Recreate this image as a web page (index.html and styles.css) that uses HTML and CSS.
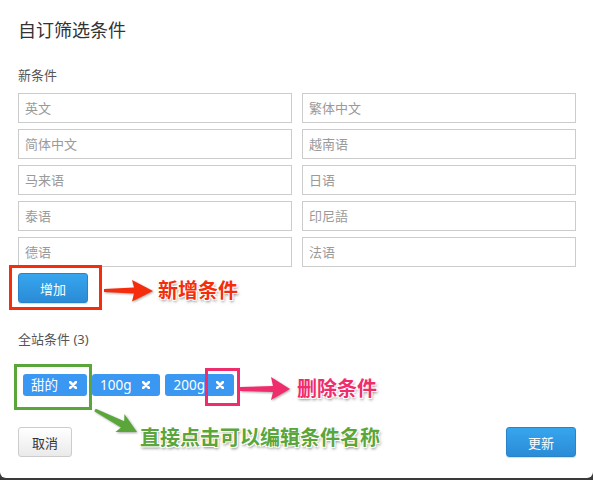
FILE: index.html
```html
<!DOCTYPE html>
<html lang="zh">
<head>
  <meta charset="UTF-8">
  <title>自订筛选条件</title>
  <link rel="stylesheet" href="styles.css">
</head>
<body>
  <div class="modal">
    <h3 class="modal-title">自订筛选条件</h3>

    <p class="section-label">新条件</p>
    <div class="lang-grid">
      <input type="text" placeholder="英文">
      <input type="text" placeholder="繁体中文">
      <input type="text" placeholder="简体中文">
      <input type="text" placeholder="越南语">
      <input type="text" placeholder="马来语">
      <input type="text" placeholder="日语">
      <input type="text" placeholder="泰语">
      <input type="text" placeholder="印尼語">
      <input type="text" placeholder="德语">
      <input type="text" placeholder="法语">
    </div>
    <button class="btn btn-primary add-btn">增加</button>

    <p class="section-label site-label">全站条件 (3)</p>
    <div class="tag-list">
      <span class="tag">甜的 <svg class="tag-x" width="8" height="8" viewBox="0 0 8 8"><path d="M1 1L7 7M7 1L1 7"/></svg></span>
      <span class="tag">100g <svg class="tag-x" width="8" height="8" viewBox="0 0 8 8"><path d="M1 1L7 7M7 1L1 7"/></svg></span>
      <span class="tag">200g <svg class="tag-x" width="8" height="8" viewBox="0 0 8 8"><path d="M1 1L7 7M7 1L1 7"/></svg></span>
    </div>

    <div class="modal-footer">
      <button class="btn btn-default">取消</button>
      <button class="btn btn-primary">更新</button>
    </div>

    <!-- annotations drawn over the dialog -->
    <svg class="marks" width="593" height="480" viewBox="0 0 593 480">
      <rect x="10.5" y="266.5" width="90" height="42" fill="none" stroke="#f52d0c" stroke-width="3"/>
      <rect x="15.5" y="365.5" width="75" height="43" fill="none" stroke="#5aa63a" stroke-width="3"/>
      <rect x="206.5" y="369.5" width="32" height="35" fill="none" stroke="#ef2d6c" stroke-width="3"/>
      <polygon class="arrow" fill="#f52d0c" points="104,289 134,287.5 132,280 153,291 132,301.5 134,293.5 104,292"/>
      <polygon class="arrow" fill="#ef2d6c" points="240,387 273,386 271,377 290,389 271,400 273,392 240,391"/>
      <polygon class="arrow" fill="#5aa63a" points="95.7,408.7 124.2,421.2 124.4,414 137,432 115.4,432 121,427.4 94.3,411.3"/>
    </svg>
    <span class="note note-red">新增条件</span>
    <span class="note note-pink">删除条件</span>
    <span class="note note-green">直接点击可以编辑条件名称</span>
  </div>
</body>
</html>
```

FILE: styles.css
```css
* {
  box-sizing: border-box;
}
body {
  margin: 0;
  background: #3a3a3a;
  font-family: "Noto Sans", "Noto Sans CJK SC", sans-serif;
  height: 480px;
  overflow: hidden;
}
.modal {
  position: relative;
  width: 593px;
  height: 478px;
  background: #fff;
  border-radius: 0 0 6px 6px;
  padding: 18px 17px 0 18px;
}
.modal-title {
  margin: 0;
  font-size: 18px;
  line-height: 24px;
  font-weight: normal;
  color: #333;
}
.section-label {
  margin: 24px 0 0;
  font-size: 13px;
  line-height: 18px;
  color: #555;
}
.lang-grid {
  margin-top: 9px;
  display: grid;
  grid-template-columns: 274px 274px;
  gap: 6px 10px;
}
.lang-grid input {
  height: 30px;
  border: 1px solid #ccc;
  padding: 0 6px;
  font-family: inherit;
  font-size: 13px;
  color: #333;
  outline: none;
}
.lang-grid input::placeholder {
  color: #9a9a9a;
}
.btn {
  display: inline-block;
  height: 30px;
  border-radius: 3px;
  font-family: inherit;
  font-size: 13px;
  cursor: pointer;
}
.btn-primary {
  width: 70px;
  border: 1px solid #2a83c9;
  background: linear-gradient(to bottom, #36a6ee, #2b8bd6);
  color: #fff;
  box-shadow: 0 1px 1px rgba(0,0,0,0.15);
}
.btn-default {
  width: 54px;
  border: 1px solid #ccc;
  background: linear-gradient(to bottom, #fff, #eaeaea);
  color: #333;
}
.add-btn {
  margin-top: 6px;
}
.site-label {
  margin-top: 27px;
}
.tag-list {
  margin-top: 26px;
  padding-left: 5px;
  display: flex;
  gap: 5px;
}
.tag {
  display: inline-flex;
  align-items: center;
  gap: 11px;
  height: 22px;
  padding: 0 10px 0 8px;
  border-radius: 3px;
  background: #3a98f2;
  color: #fff;
  font-size: 13.5px;
  line-height: 22px;
}
.tag-x {
  stroke: #fff;
  stroke-width: 2.6;
  stroke-linecap: round;
}
.modal-footer {
  margin-top: 31px;
  display: flex;
  justify-content: space-between;
}
.marks {
  position: absolute;
  left: 0;
  top: 0;
  pointer-events: none;
}
.arrow {
  filter: drop-shadow(1px 1px 1px rgba(0,0,0,0.35));
}
.note {
  position: absolute;
  font-family: "Noto Sans CJK SC", sans-serif;
  font-size: 20px;
  line-height: 24px;
  font-weight: bold;
  white-space: nowrap;
  text-shadow: -1px -1px 0 #fff, 1px -1px 0 #fff, -1px 1px 0 #fff, 1px 1px 0 #fff, 1px 2px 3px rgba(0,0,0,0.5);
}
.note-red {
  left: 158px;
  top: 278px;
  color: #f52d0c;
}
.note-pink {
  left: 297px;
  top: 376px;
  color: #ef2d6c;
}
.note-green {
  left: 140px;
  top: 425px;
  color: #5aa63a;
}
```
